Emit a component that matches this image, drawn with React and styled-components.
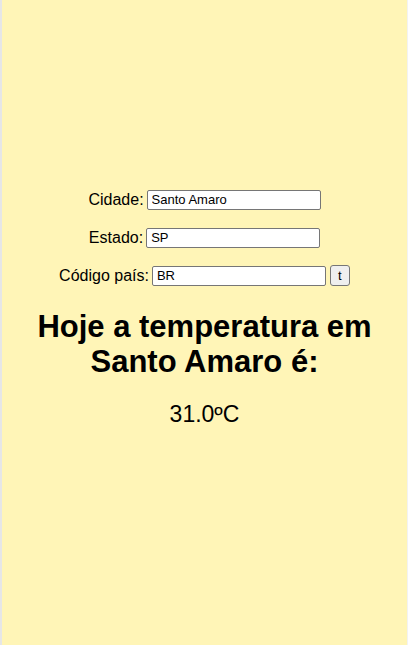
import React, { useState } from 'react';
import styled, { createGlobalStyle } from 'styled-components';

const GlobalStyle = createGlobalStyle`
  html, body {
    margin: 0;
    padding: 0;
    background: #fff;
  }
  body {
    font-family: "Liberation Sans", Arial, sans-serif;
  }
`;

const Page = styled.div` /* fundo amarelo */
  box-sizing: border-box;
  min-height: 100vh;
  background-color: #fff5b7;
  border-left: 2px solid #e6e6e6;
  border-right: 1px solid #f2f2f2;
  display: flex;
  flex-direction: column;
  align-items: center;
  padding-top: 189px;
  text-align: center;
  color: #000;
`;

const Form = styled.form`
  display: flex;
  flex-direction: column;
  align-items: center;
  gap: 17px;
`;

const Row = styled.div`
  display: flex;
  align-items: center;
  font-size: 16px;
  height: 21px;
`;

const Label = styled.label`
  margin-right: 3px;
`;

const Input = styled.input`
  box-sizing: border-box;
  width: 174px;
  height: 20px;
  padding: 1px 4px;
  border: 1px solid #767676;
  border-radius: 2px;
  font-family: "Liberation Sans", Arial, sans-serif;
  font-size: 13px;
  color: #000;
  background: #fff;
`;

const Button = styled.button`
  box-sizing: border-box;
  margin-left: 4px;
  width: 20px;
  height: 21px;
  padding: 0;
  border: 1px solid #767676;
  border-radius: 3px;
  background: #efefef;
  font-family: "Liberation Sans", Arial, sans-serif;
  font-size: 13px;
  color: #000;
`;

const Title = styled.h1`
  margin: 23px 0 0;
  font-size: 31px;
  line-height: 35px;
  font-weight: 700;
  width: 380px;
`;

const Temp = styled.p`
  margin: 22px 0 0;
  font-size: 23px;
`;

export default function App() {
  const [cidade, setCidade] = useState('Santo Amaro');
  const [estado, setEstado] = useState('SP');
  const [pais, setPais] = useState('BR');

  return (
    <>
      <GlobalStyle />
      <Page>
        <Form onSubmit={(e) => e.preventDefault()}>
          <Row>
            <Label>Cidade:</Label>
            <Input value={cidade} onChange={(e) => setCidade(e.target.value)} />
          </Row>
          <Row>
            <Label>Estado:</Label>
            <Input value={estado} onChange={(e) => setEstado(e.target.value)} />
          </Row>
          <Row>
            <Label>Código país:</Label>
            <Input value={pais} onChange={(e) => setPais(e.target.value)} />
            <Button type="submit">t</Button>
          </Row>
        </Form>
        <Title>Hoje a temperatura em {cidade} é:</Title>
        <Temp>31.0ºC</Temp>
      </Page>
    </>
  );
}
